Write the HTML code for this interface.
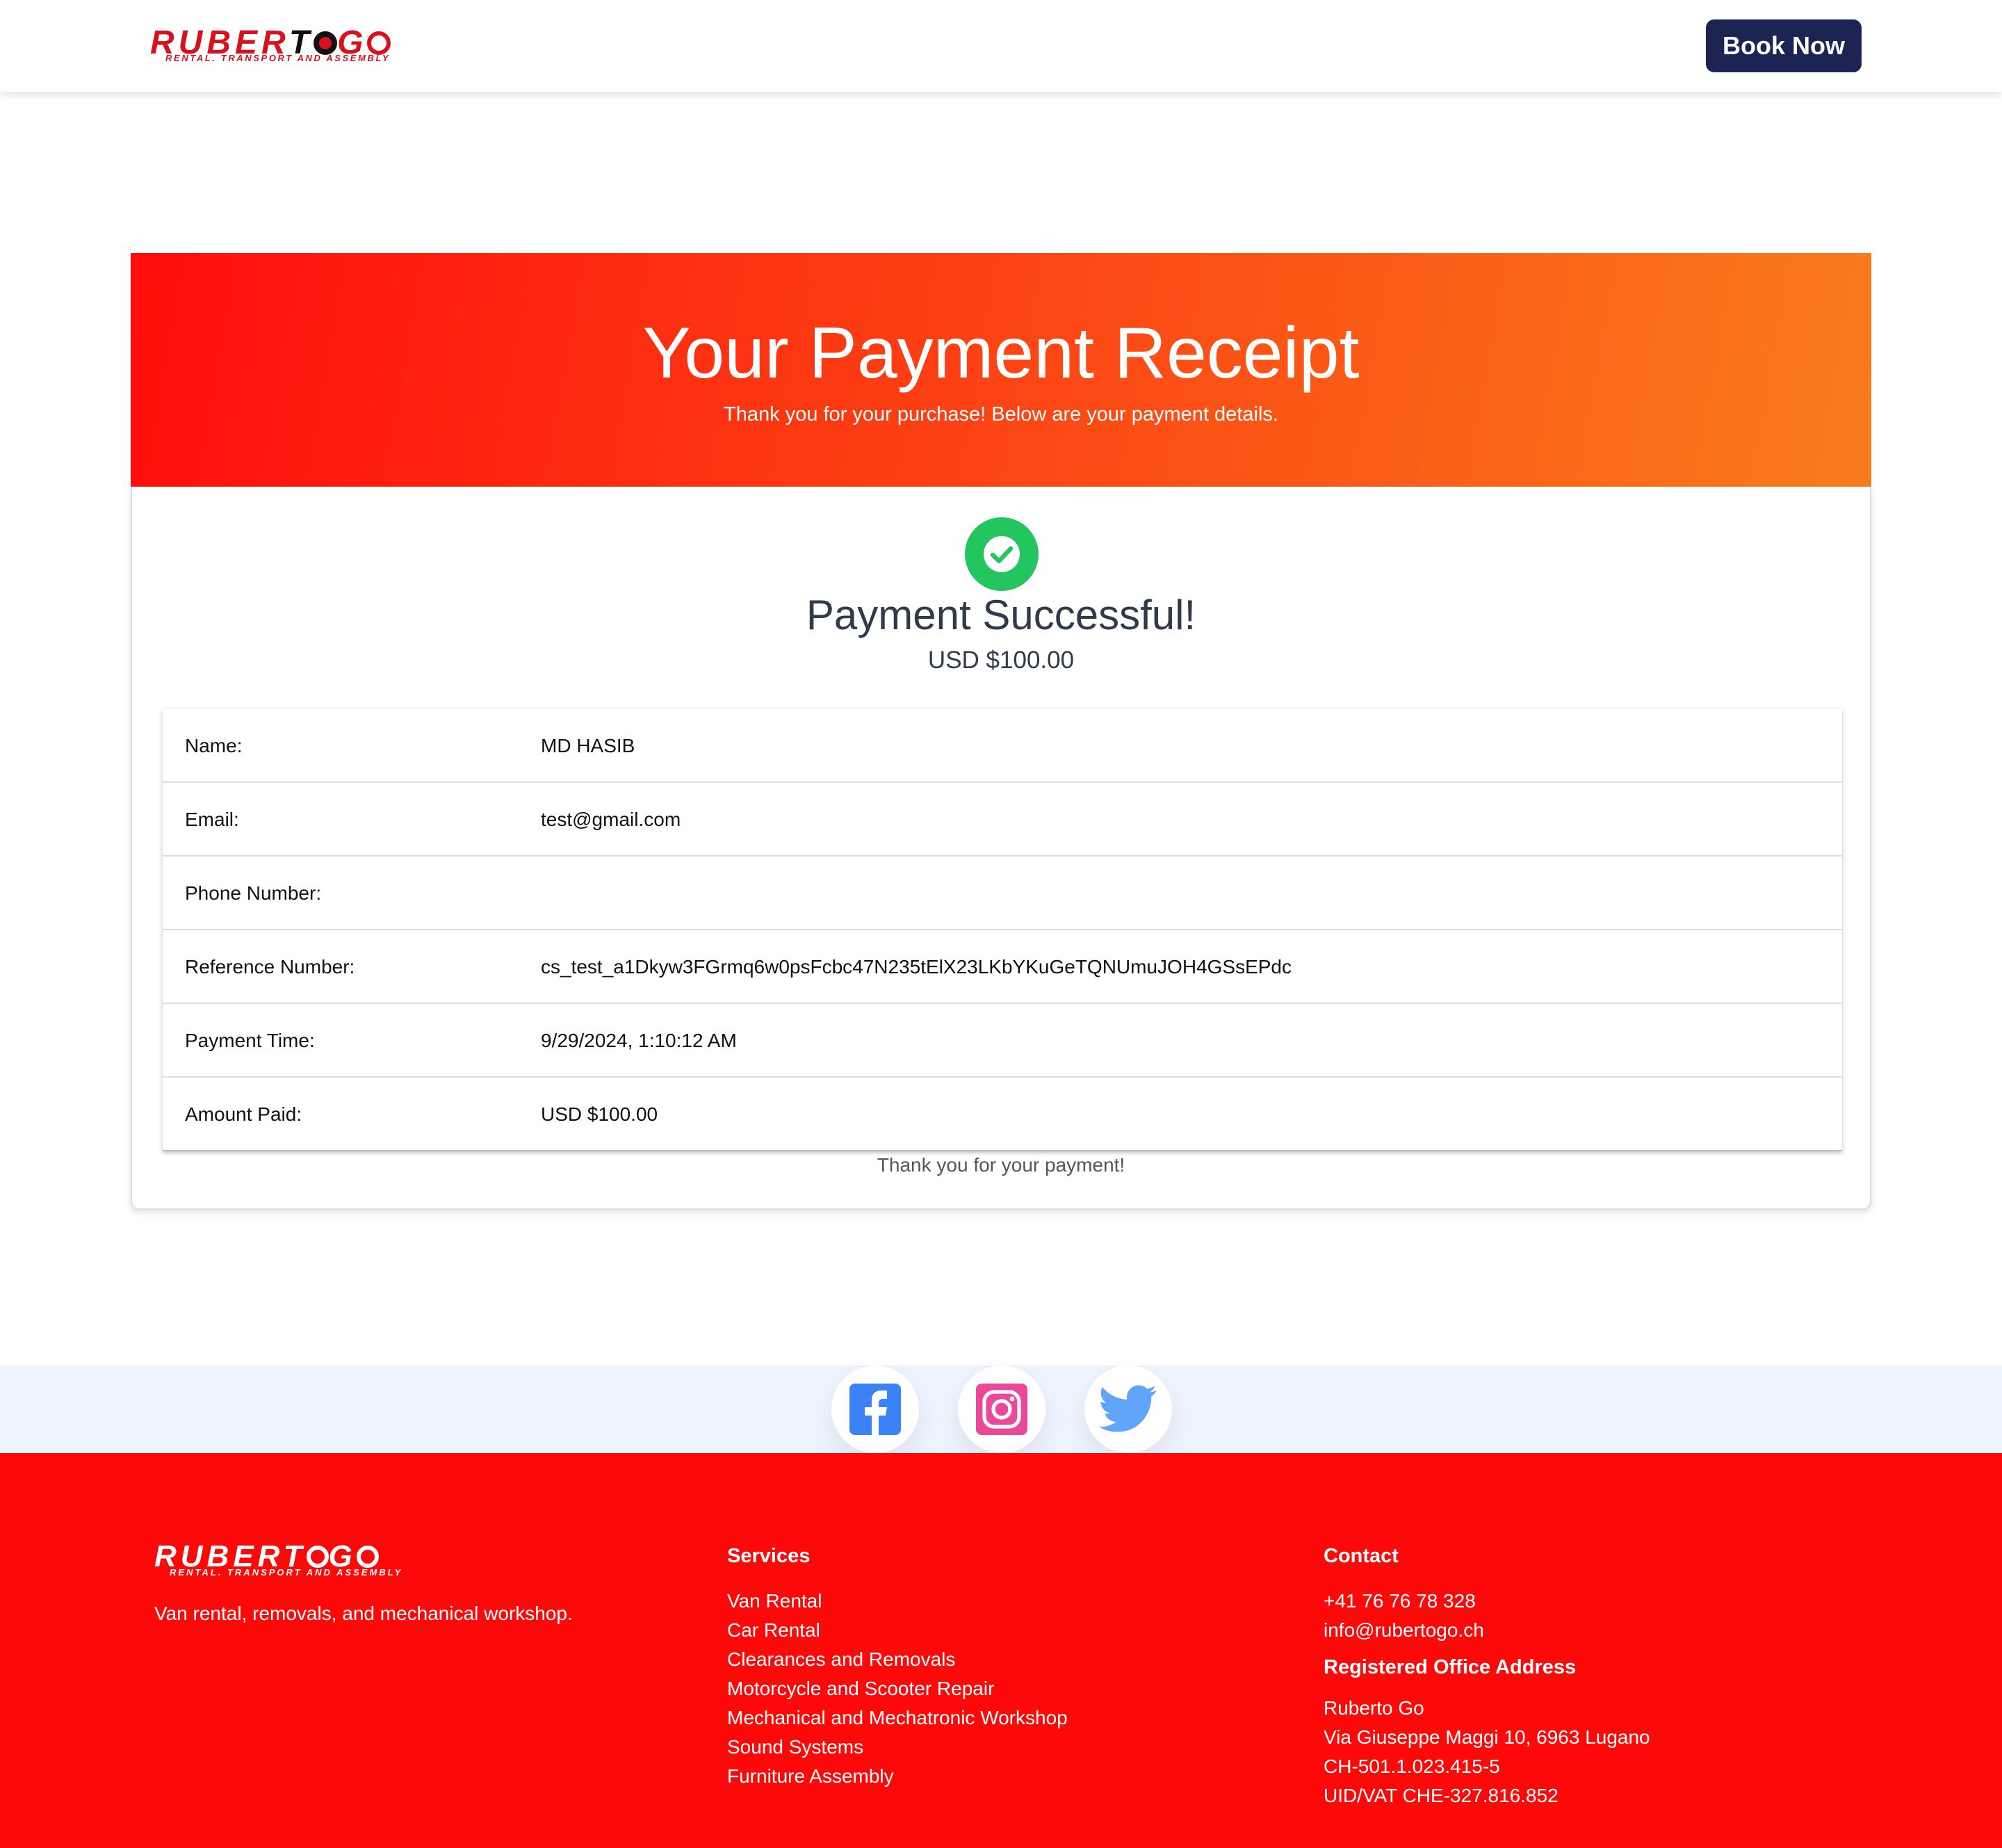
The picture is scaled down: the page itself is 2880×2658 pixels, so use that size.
<!DOCTYPE html>
<html><head><meta charset="utf-8"><style>
html{zoom:2}
*{box-sizing:border-box;margin:0;padding:0}
body{width:1440px;height:1329px;font-family:"Liberation Sans",Arial,sans-serif;background:#fff;position:relative;overflow:hidden;color:#111}
.hdr{position:absolute;left:0;top:0;width:1440px;height:66px;background:#fff;box-shadow:0 2px 6px rgba(0,0,0,.12)}
.logo{position:absolute;font-style:italic;font-weight:900;letter-spacing:1px}
.btn{position:absolute;left:1227px;top:14px;width:112px;height:38px;background:#1b2452;color:#fff;border-radius:6px;font-weight:bold;font-size:18px;text-align:center;line-height:38px}
.banner{position:absolute;left:94px;top:182px;width:1252px;height:168px;background:linear-gradient(100deg,#ff0c0c,#f97c1c);color:#fff;text-align:center}
.banner h1{font-weight:normal;font-size:52px;margin-top:46px;line-height:1}
.banner p{font-size:14.5px;margin-top:10px}
.card{position:absolute;left:94px;top:350px;width:1252px;height:520px;border:1px solid #ddd;border-top:none;border-radius:0 0 6px 6px;box-shadow:0 2px 5px rgba(0,0,0,.12);text-align:center}
.tbl{position:absolute;left:22px;top:160px;width:1208px;box-shadow:0 1px 3px rgba(0,0,0,.25);text-align:left;font-size:14px}
.row{height:53px;border-bottom:1px solid #ddd;position:relative;line-height:53px}
.row span{position:absolute;left:16px}.row b{font-weight:normal;position:absolute;left:272px}
.soc{position:absolute;left:0;top:982px;width:1440px;height:63px;background:#edf4fd}
.ci{position:absolute;top:982px;width:63px;height:63px;border-radius:50%;background:#fff;box-shadow:0 8px 20px rgba(0,0,0,.08);display:flex;align-items:center;justify-content:center}
.ft{position:absolute;left:0;top:1045px;width:1440px;height:284px;background:#fe0909;color:#fff;font-size:14px}
.ft h4{font-size:14.5px;position:absolute}
.ft .l{position:absolute;line-height:21px}
</style></head><body>
<div class="hdr">
 <div class="logo" style="left:108px;top:17px;color:#d8121c;font-size:24px;letter-spacing:3px">RUBER<span style="color:#111">T</span><span style="display:inline-block;width:17px;height:17px;border-radius:50%;border:4px solid #111;background:#d8121c;vertical-align:-1px"></span>G<span style="display:inline-block;width:17px;height:17px;border-radius:50%;border:3px solid #d8121c;vertical-align:-1px"></span></div>
 <div class="logo" style="left:119px;top:38px;color:#d8121c;font-size:6.5px;letter-spacing:1.3px">RENTAL. TRANSPORT AND ASSEMBLY</div>
 <div class="btn">Book Now</div>
</div>
<div class="banner"><h1>Your Payment Receipt</h1><p>Thank you for your purchase! Below are your payment details.</p></div>
<div class="card">
 <svg style="position:absolute;left:599px;top:22px" width="53" height="53" viewBox="0 0 53 53"><circle cx="26.5" cy="26.5" r="26.5" fill="#22c55e"/><circle cx="26.5" cy="26.5" r="13" fill="#fff"/><path d="M20 27l4.5 4.5 8.5-9" stroke="#22c55e" stroke-width="3.2" fill="none" stroke-linecap="round" stroke-linejoin="round"/></svg>
 <div style="position:absolute;left:0;width:100%;top:75px;font-size:30px;color:#2f3a4a">Payment Successful!</div>
 <div style="position:absolute;left:0;width:100%;top:115px;font-size:17.5px;color:#2f3a4a">USD $100.00</div>
 <div class="tbl">
  <div class="row"><span>Name:</span><b>MD HASIB</b></div>
  <div class="row"><span>Email:</span><b>test@gmail.com</b></div>
  <div class="row"><span>Phone Number:</span><b></b></div>
  <div class="row"><span>Reference Number:</span><b>cs_test_a1Dkyw3FGrmq6w0psFcbc47N235tElX23LKbYKuGeTQNUmuJOH4GSsEPdc</b></div>
  <div class="row"><span>Payment Time:</span><b>9/29/2024, 1:10:12 AM</b></div>
  <div class="row" style="border-bottom:1px solid #bbb"><span>Amount Paid:</span><b>USD $100.00</b></div>
 </div>
 <div style="position:absolute;left:0;width:100%;top:480px;font-size:14px;color:#555">Thank you for your payment!</div>
</div>
<div class="soc"></div>
<div class="ci" style="left:598px"><svg width="37" height="37" viewBox="0 0 37 37"><rect width="37" height="37" rx="4" fill="#3b82f6"/><path d="M21 37V23h5l1-6h-6v-3c0-2 1-3 3-3h3V5h-4c-5 0-7 3-7 7v5h-5v6h5v14z" fill="#fff"/></svg></div>
<div class="ci" style="left:689px"><svg width="37" height="37" viewBox="0 0 37 37"><rect width="37" height="37" rx="4" fill="#ec4899"/><rect x="6" y="6" width="25" height="25" rx="7" fill="none" stroke="#fff" stroke-width="2.6"/><circle cx="18.5" cy="18.5" r="6" fill="none" stroke="#fff" stroke-width="2.6"/><circle cx="26" cy="11" r="1.7" fill="#fff"/></svg></div>
<div class="ci" style="left:780px"><svg width="42" height="36" viewBox="0 0 24 20"><path d="M23.6 2.3c-.9.4-1.8.6-2.8.8 1-.6 1.8-1.6 2.1-2.7-.9.6-2 1-3.1 1.2A4.9 4.9 0 0 0 11.5 6 13.9 13.9 0 0 1 1.4.9a4.9 4.9 0 0 0 1.5 6.5c-.8 0-1.5-.2-2.2-.6 0 2.4 1.7 4.4 3.9 4.8-.7.2-1.5.2-2.2.1.6 2 2.4 3.4 4.6 3.4A9.8 9.8 0 0 1 0 17.1 13.9 13.9 0 0 0 7.5 19.3c9.1 0 14-7.5 14-14v-.6c1-.7 1.8-1.5 2.1-2.4z" fill="#60a5fa"/></svg></div>
<div class="ft">
 <div class="logo" style="left:111px;top:62px;font-size:22px;color:#fff;letter-spacing:3px">RUBERT<span style="display:inline-block;width:16px;height:16px;border-radius:50%;border:3px solid #fff;vertical-align:-1px"></span>G<span style="display:inline-block;width:16px;height:16px;border-radius:50%;border:3px solid #fff;vertical-align:-1px"></span></div>
 <div class="logo" style="left:122px;top:82px;font-size:6.5px;letter-spacing:1.5px;color:#fff">RENTAL. TRANSPORT AND ASSEMBLY</div>
 <div class="l" style="left:111px;top:105px">Van rental, removals, and mechanical workshop.</div>
 <h4 style="left:523px;top:66px">Services</h4>
 <div class="l" style="left:523px;top:96px">Van Rental<br>Car Rental<br>Clearances and Removals<br>Motorcycle and Scooter Repair<br>Mechanical and Mechatronic Workshop<br>Sound Systems<br>Furniture Assembly</div>
 <h4 style="left:952px;top:66px">Contact</h4>
 <div class="l" style="left:952px;top:96px">+41 76 76 78 328<br>info@rubertogo.ch</div>
 <h4 style="left:952px;top:146px">Registered Office Address</h4>
 <div class="l" style="left:952px;top:173px">Ruberto Go<br>Via Giuseppe Maggi 10, 6963 Lugano<br>CH-501.1.023.415-5<br>UID/VAT CHE-327.816.852</div>
</div>
</body></html>
